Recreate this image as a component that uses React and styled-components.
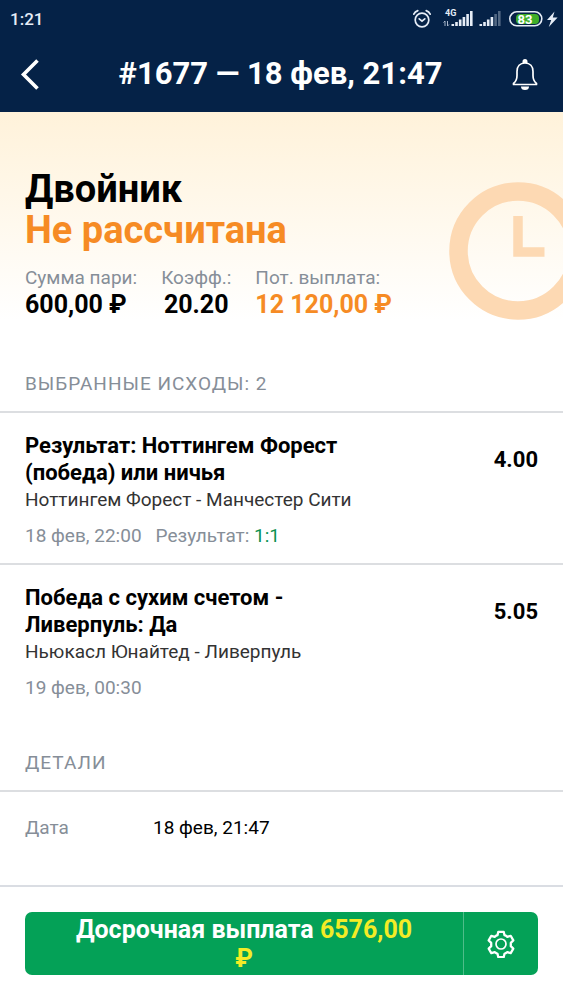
import React from "react";
import styled, { createGlobalStyle } from "styled-components";

const outcomes = [
  {
    title: "Результат: Ноттингем Форест (победа) или ничья",
    match: "Ноттингем Форест - Манчестер Сити",
    date: "18 фев, 22:00",
    score: "1:1",
    odds: "4.00",
  },
  {
    title: "Победа с сухим счетом - Ливерпуль: Да",
    match: "Ньюкасл Юнайтед - Ливерпуль",
    date: "19 фев, 00:30",
    odds: "5.05",
  },
];

export default function App() {
  return (
    <Page>
      <GlobalStyle />
      <Header>
        <StatusBar>
          <span>1:21</span>
          <StatusIcons />
        </StatusBar>
        <TitleBar>
          <IconButton type="button" aria-label="Назад">
            <BackIcon />
          </IconButton>
          <Title>#1677 — 18 фев, 21:47</Title>
          <IconButton type="button" aria-label="Уведомления">
            <BellIcon />
          </IconButton>
        </TitleBar>
      </Header>

      <Summary>
        <BetType>Двойник</BetType>
        <BetStatus>Не рассчитана</BetStatus>
        <Stats>
          <div>
            <StatLabel>Сумма пари:</StatLabel>
            <StatValue>600,00 ₽</StatValue>
          </div>
          <div>
            <StatLabel>Коэфф.:</StatLabel>
            <StatValue $align="center">20.20</StatValue>
          </div>
          <div>
            <StatLabel>Пот. выплата:</StatLabel>
            <StatValue $color="#f68b24">12 120,00 ₽</StatValue>
          </div>
        </Stats>
        <Clock viewBox="0 0 138 138" aria-hidden="true">
          <circle cx="69" cy="69" r="59.5" fill="none" strokeWidth="18.5" />
          <path d="M69 34v36h26.500" fill="none" strokeWidth="9.500" />
        </Clock>
      </Summary>

      <SectionTitle>Выбранные исходы: 2</SectionTitle>
      <OutcomeList>
        {outcomes.map((item) => (
          <Outcome key={item.title}>
            <OutcomeInfo>
              <OutcomeTitle>{item.title}</OutcomeTitle>
              <Match>{item.match}</Match>
              <Meta>
                <span>{item.date}</span>
                {item.score && (
                  <span>
                    Результат: <Score>{item.score}</Score>
                  </span>
                )}
              </Meta>
            </OutcomeInfo>
            <Odds>{item.odds}</Odds>
          </Outcome>
        ))}
      </OutcomeList>

      <SectionTitle>Детали</SectionTitle>
      <Details>
        <dt>Дата</dt>
        <dd>18 фев, 21:47</dd>
      </Details>

      <Footer>
        <CashOut type="button">
          Досрочная выплата <Amount>6576,00 ₽</Amount>
        </CashOut>
        <SettingsButton type="button" aria-label="Настройки">
          <GearIcon />
        </SettingsButton>
      </Footer>
    </Page>
  );
}

function StatusIcons() {
  return (
    <svg width="148" height="22" viewBox="0 0 148 22" aria-hidden="true">
      {/* alarm */}
      <g fill="none" stroke="#e6edf7" strokeWidth="1.7" strokeLinecap="round">
        <circle cx="11" cy="12" r="6.8" />
        <path d="M8.200 10.800l2.800 2.400 2.800-2.400M2.800 6.200q1.200-2.600 4-3.600M19.200 6.200q-1.200-2.600-4-3.600" />
      </g>
      {/* mobile data */}
      <g fill="#e6edf7">
        <text x="34" y="8" fontSize="9" fontWeight="700">
          4G
        </text>
        <path d="M40.500 16h2.600v2h-2.600zM44.200 14h2.600v4h-2.600zM47.900 11.500h2.600v6.500h-2.600zM51.600 9h2.600v9h-2.600zM55.300 6h2.600v12h-2.600zM59 3h2.600v15h-2.600z" />
        <path d="M68.500 16h2.600v2h-2.600zM72.200 14h2.600v4h-2.600zM75.900 11.500h2.600v6.500h-2.600zM79.600 9h2.600v9h-2.600z" />
        <path
          d="M83.300 6h2.600v12h-2.600zM87 3h2.600v15h-2.600z"
          opacity="0.35"
        />
      </g>
      <path
        d="M34 18v-5l-1.500 1.500M36.500 13v5l1.500-1.500"
        fill="none"
        stroke="#a9b7cc"
        strokeWidth="1"
      />
      {/* battery */}
      <rect
        x="98.800"
        y="3.800"
        width="32"
        height="14"
        rx="7"
        fill="none"
        stroke="#e6edf7"
        strokeWidth="1.600"
      />
      <rect x="105" y="6" width="23" height="10" rx="4" fill="#3fae29" />
      <text
        x="114"
        y="16"
        fill="#fff"
        fontSize="13"
        fontWeight="700"
        textAnchor="middle"
      >
        83
      </text>
      <path d="M143.500 3.500l-7.500 8.500h4.200l-2.400 7 8.800-9.500h-4.800z" fill="#e6edf7" />
    </svg>
  );
}

function BackIcon() {
  return (
    <svg width="20" height="32" viewBox="0 0 20 32">
      <path
        d="M17.500 2.500 3.500 16.500l14 14"
        fill="none"
        stroke="#fff"
        strokeWidth="3.600"
      />
    </svg>
  );
}

function BellIcon() {
  return (
    <svg width="29" height="32" viewBox="0 0 29 32">
      <path
        d="M1.500 26.500v-1c2.500-2 3.500-4 3.500-8v-4c0-5 3-8.500 8-8.500s8 3.500 8 8.500v4c0 4 1 6 3.500 8v1z"
        fill="none"
        stroke="#fff"
        strokeWidth="1.700"
        strokeLinejoin="round"
      />
      <path d="M10.500 5V3.500a2.500 2.500 0 0 1 5 0V5z" fill="#fff" />
      <path d="M9 28.500h8a4 3.500 0 0 1-8 0z" fill="#fff" />
    </svg>
  );
}

function GearIcon() {
  return (
    <svg width="28" height="28" viewBox="0 0 28 28">
      <g fill="none" stroke="#fff" strokeLinejoin="round">
        <path
          strokeWidth="2.300"
          d="M11.300 1.800h5.400l.8 3.400q1.600.6 2.800 1.600l3.400-1 2.600 4.600-2.500 2.400v3.400l2.500 2.400-2.600 4.600-3.400-1q-1.200 1-2.800 1.600l-.8 3.400h-5.400l-.8-3.400q-1.600-.6-2.800-1.600l-3.400 1-2.600-4.600 2.500-2.400v-3.400L1.700 10.400l2.600-4.600 3.400 1q1.200-1 2.800-1.600z"
        />
        <circle cx="14" cy="14" r="5" strokeWidth="1.700" />
      </g>
    </svg>
  );
}

const GlobalStyle = createGlobalStyle`
  * {
    box-sizing: border-box;
  }

  body {
    margin: 0;
    background: #fff;
    color: #000;
    font-family: Roboto, "Liberation Sans", sans-serif;
  }
`;

const Page = styled.div`
  display: flex;
  flex-direction: column;
  min-height: 100vh;
`;

const Header = styled.header`
  padding-bottom: 15px;
  background: #052247;
  color: #fff;
`;

const StatusBar = styled.div`
  display: flex;
  align-items: center;
  justify-content: space-between;
  height: 38px;
  padding: 0 4px 0 10px;
  color: #e6edf7;
  font-size: 17px;
  font-weight: 500;
`;

const TitleBar = styled.div`
  display: grid;
  grid-template-columns: 1fr auto 1fr;
  align-items: center;
  height: 59px;
  padding: 13px 22px 0 20px;
`;

const Button = styled.button`
  border: 0;
  background: none;
  color: inherit;
  font-family: inherit;
  cursor: pointer;
`;

const IconButton = styled(Button)`
  display: flex;
  justify-self: start;
  padding: 0;

  &:last-child {
    justify-self: end;
  }
`;

const Title = styled.h1`
  margin: 0;
  font-size: 31px;
  font-weight: 700;
  line-height: 40px;
`;

const Summary = styled.section`
  position: relative;
  overflow: hidden;
  padding: 57px 25px 40px;
  background: linear-gradient(#fff2da, #fff 84%);
`;

const BetType = styled.h2`
  margin: 0;
  font-size: 38px;
  font-weight: 700;
  line-height: 41px;
`;

const BetStatus = styled.p`
  margin: 0;
  color: #f68b24;
  font-size: 38px;
  font-weight: 700;
  line-height: 41px;
`;

const Stats = styled.div`
  display: flex;
  gap: 24px;
  margin-top: 15px;
`;

const StatLabel = styled.div`
  color: #868e98;
  font-size: 19px;
  line-height: 24px;
`;

const StatValue = styled.div`
  color: ${(props) => props.$color || "#000"};
  font-size: 25px;
  font-weight: 700;
  line-height: 30px;
  text-align: ${(props) => props.$align || "left"};
`;

const Clock = styled.svg`
  position: absolute;
  top: 70px;
  right: -24px;
  width: 138px;
  stroke: #fdd9b3;
`;

const SectionTitle = styled.h3`
  margin: 0;
  padding: 12px 25px 15px;
  border-bottom: 2px solid #dcdee1;
  color: #868e98;
  font-size: 19px;
  font-weight: 400;
  line-height: 24px;
  letter-spacing: 1px;
  text-transform: uppercase;
`;

const OutcomeList = styled.ul`
  margin: 0 0 24px;
  padding: 0;
  list-style: none;
`;

const Outcome = styled.li`
  display: flex;
  justify-content: space-between;
  padding: 19px 25px 14px;

  & + & {
    border-top: 2px solid #dcdee1;
  }
`;

const OutcomeInfo = styled.div`
  max-width: 340px;
`;

const OutcomeTitle = styled.h4`
  margin: 0;
  font-size: 22px;
  font-weight: 700;
  line-height: 27px;
`;

const Match = styled.p`
  margin: 0;
  color: #333;
  font-size: 19px;
  line-height: 27px;
`;

const Meta = styled.p`
  display: flex;
  gap: 14px;
  margin: 10px 0 0;
  color: #868e98;
  font-size: 19px;
  line-height: 26px;
`;

const Score = styled.span`
  color: #0a9152;
`;

const Odds = styled.div`
  padding-top: 14px;
  font-size: 22px;
  font-weight: 700;
  line-height: 27px;
`;

const Details = styled.dl`
  display: flex;
  margin: 0;
  padding: 23px 25px;
  font-size: 19px;
  line-height: 26px;

  dt {
    width: 128px;
    color: #868e98;
  }

  dd {
    margin: 0;
  }
`;

const Footer = styled.footer`
  display: flex;
  margin-top: auto;
  padding: 25px;
  border-top: 2px solid #dadde3;
`;

const CashOut = styled(Button)`
  flex: 1;
  padding: 3px 48px 2px;
  border-radius: 7px 0 0 7px;
  background: #04a157;
  color: #fff;
  font-size: 25px;
  font-weight: 700;
  line-height: 29px;
`;

const Amount = styled.span`
  color: #f3ec26;
`;

const SettingsButton = styled(Button)`
  display: flex;
  align-items: center;
  justify-content: center;
  width: 75px;
  border-left: 1px solid #4fbd89;
  border-radius: 0 7px 7px 0;
  background: #04a157;
`;
